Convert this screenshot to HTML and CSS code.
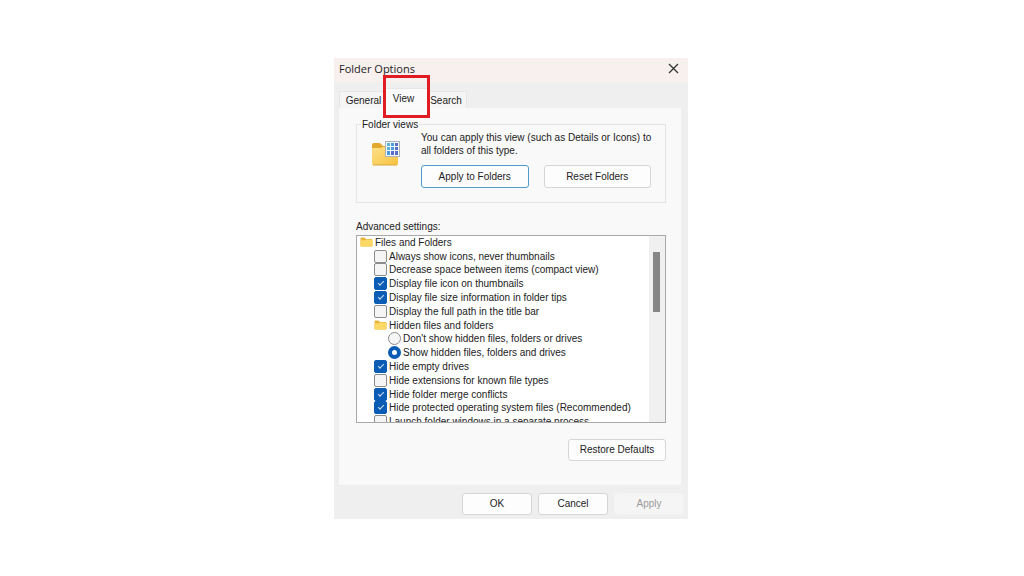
FILE: index.html
```html
<!DOCTYPE html>
<html lang="en">
<head>
  <meta charset="UTF-8">
  <title>Folder Options</title>
  <meta name="viewport" content="width=device-width, initial-scale=1.0">
  <link rel="stylesheet" href="styles.css">
</head>
<body>

  <!-- Folder shape shared by the tree rows -->
  <svg width="0" height="0" class="defs">
    <symbol id="folder" viewBox="0 0 13 10">
      <path d="M0.5 1.5Q0.5 0.5 1.5 0.5H4.5L6 2H11.5Q12.5 2 12.5 3V8.5Q12.5 9.5 11.5 9.5H1.5Q0.5 9.5 0.5 8.5Z" fill="#e9b63c"/>
      <path d="M0.5 4Q0.5 3.2 1.5 3.2H5L6.2 2.4H11.5Q12.5 2.4 12.5 3.3V8.5Q12.5 9.5 11.5 9.5H1.5Q0.5 9.5 0.5 8.5Z" fill="#fcd866"/>
    </symbol>
  </svg>

  <main class="dialog">
    <header class="titlebar">
      <h1>Folder Options</h1>
      <button class="close" aria-label="Close">
        <svg width="11" height="11" viewBox="0 0 11 11"><path d="M1 1L10 10M10 1L1 10" stroke="#333" stroke-width="1.3" fill="none"/></svg>
      </button>
    </header>

    <nav class="tabs" role="tablist">
      <button class="tab" role="tab">General</button>
      <button class="tab active" role="tab" aria-selected="true">View</button>
      <button class="tab" role="tab">Search</button>
    </nav>

    <section class="panel">
      <fieldset class="views">
        <legend>Folder views</legend>
        <svg class="views-icon" width="30" height="28" viewBox="0 0 30 28">
          <defs>
            <linearGradient id="front" x1="0" y1="0" x2="1" y2="1">
              <stop offset="0" stop-color="#fde08a"/>
              <stop offset="1" stop-color="#f6c340"/>
            </linearGradient>
          </defs>
          <path d="M1 6Q1 4 3 4H9L12 7H25Q27 7 27 9V24H1Z" fill="#e3a92f"/>
          <path d="M1 10Q1 9 2 9H9.500L12 8H26Q27 8 27 9V24.500Q27 26 25.500 26H2.500Q1 26 1 24.500Z" fill="url(#front)"/>
          <path d="M2 26H26" stroke="#dba63a"/>
          <rect x="14.500" y="2.500" width="14" height="15" fill="#f4f7fa" stroke="#a9b4be"/>
          <path d="M16 4h3v3h-3zM16 8h3v3h-3z" fill="#58b4d8"/>
          <path d="M20 4h3v3h-3zM20 8h3v3h-3zM16 12h3v4h-3z" fill="#4a9be0"/>
          <path d="M24 4h3v3h-3zM24 8h3v3h-3zM20 12h3v4h-3zM24 12h3v4h-3z" fill="#5a6fcb"/>
        </svg>
        <div class="views-body">
          <p>You can apply this view (such as Details or Icons) to all folders of this type.</p>
          <div class="views-buttons">
            <button class="btn focused">Apply to Folders</button>
            <button class="btn">Reset Folders</button>
          </div>
        </div>
      </fieldset>

      <h2>Advanced settings:</h2>
      <div class="settings">
        <ul class="tree">
          <li><svg class="folder"><use href="#folder"/></svg>Files and Folders</li>
          <li class="l1"><label><input type="checkbox">Always show icons, never thumbnails</label></li>
          <li class="l1"><label><input type="checkbox">Decrease space between items (compact view)</label></li>
          <li class="l1"><label><input type="checkbox" checked>Display file icon on thumbnails</label></li>
          <li class="l1"><label><input type="checkbox" checked>Display file size information in folder tips</label></li>
          <li class="l1"><label><input type="checkbox">Display the full path in the title bar</label></li>
          <li class="l1"><svg class="folder"><use href="#folder"/></svg>Hidden files and folders</li>
          <li class="l2"><label><input type="radio" name="hidden">Don't show hidden files, folders or drives</label></li>
          <li class="l2"><label><input type="radio" name="hidden" checked>Show hidden files, folders and drives</label></li>
          <li class="l1"><label><input type="checkbox" checked>Hide empty drives</label></li>
          <li class="l1"><label><input type="checkbox">Hide extensions for known file types</label></li>
          <li class="l1"><label><input type="checkbox" checked>Hide folder merge conflicts</label></li>
          <li class="l1"><label><input type="checkbox" checked>Hide protected operating system files (Recommended)</label></li>
          <li class="l1"><label><input type="checkbox">Launch folder windows in a separate process</label></li>
        </ul>
        <div class="scrollbar"><div class="thumb"></div></div>
      </div>

      <button class="btn restore">Restore Defaults</button>
    </section>

    <footer class="actions">
      <button class="btn">OK</button>
      <button class="btn">Cancel</button>
      <button class="btn" disabled>Apply</button>
    </footer>
  </main>

</body>
</html>
```
FILE: styles.css
```css
* {
  box-sizing: border-box;
}
body {
  margin: 0;
  padding-right: 2px;
  min-height: 100vh;
  display: flex;
  align-items: center;
  justify-content: center;
  background: #fff;
  color: #222;
  font-family: "Liberation Sans", Arial, sans-serif;
  font-size: 10px;
  line-height: 13px;
}
h1, h2, p, ul {
  margin: 0;
  padding: 0;
  font-size: 10px;
  font-weight: normal;
}
button {
  font: inherit;
  color: inherit;
  padding: 0;
}
.defs {
  position: absolute;
}
.dialog {
  width: 354px;
  max-width: 100%;
  background: #efefef;
}

/* title bar */
.titlebar {
  display: flex;
  align-items: center;
  justify-content: space-between;
  height: 24px;
  padding: 0 9px 2px 5px;
  background: #f8f0ee;
}
.titlebar h1 {
  font-family: "Open Sans", "Segoe UI", sans-serif;
  font-size: 11px;
}
.close {
  display: flex;
  border: none;
  background: none;
}

/* tabs */
.tabs {
  display: flex;
  align-items: flex-end;
  height: 26px;
  padding: 0 5px;
}
.tab {
  height: 17px;
  width: 45px;
  padding: 2px 0 0 4px;
  border: 1px solid #e6e6e6;
  border-bottom: none;
  background: #f5f5f5;
}
.tab:last-child {
  width: 38px;
  padding: 2px 4px 0 0;
}
.tab.active {
  position: relative;
  height: 20px;
  padding: 0 6px 0 0;
  background: #fafafa;
}
/* red highlight around the current tab */
.tab.active::after {
  content: "";
  position: absolute;
  box-sizing: border-box;
  top: -14px;
  left: -2px;
  width: 47px;
  height: 43px;
  border: 3px solid #e01b22;
}

/* page */
.panel {
  display: flex;
  flex-direction: column;
  margin: 0 7px 0 5px;
  padding: 10px 15px 24px 17px;
  background: #f9f9f9;
}
.views {
  display: flex;
  margin: 0;
  padding: 0 14px 14px 14px;
  border: 1px solid #e4e4e4;
}
.views legend {
  margin-left: -10px;
  padding: 0 1px;
}
.views-icon {
  flex: none;
  margin: 8px 20px 0 0;
}
.views-body {
  flex: 1;
}
.views-body p {
  margin-right: -8px;
}
.views-buttons {
  display: grid;
  grid-template-columns: 1fr 1fr;
  gap: 15px;
  margin-top: 8px;
}
.btn {
  height: 22px;
  border: 1px solid #d6d6d6;
  border-radius: 3px;
  background: #fdfdfd;
}
.views-buttons .btn {
  height: 23px;
}
.btn.focused {
  border-color: #4d9ccb;
}
.btn:disabled {
  color: #9a9a9a;
  border-color: #f3f3f3;
  background: #f5f5f5;
}
h2 {
  margin: 17px 0 2px;
}

/* advanced settings list */
.settings {
  display: flex;
  height: 188px;
  overflow: hidden;
  border: 1px solid #a9a9a9;
  background: #fff;
}
.tree {
  flex: 1;
  display: grid;
  grid-auto-rows: 1fr;
  height: 193px;
  padding-left: 3px;
  list-style: none;
}
.tree li, .tree label {
  display: flex;
  align-items: center;
  min-height: 0;
  white-space: nowrap;
}
.tree .l1 {
  padding-left: 14px;
}
.tree .l2 {
  padding-left: 28px;
}
.folder {
  width: 13px;
  height: 10px;
  margin-right: 2px;
}
.tree input {
  appearance: none;
  display: grid;
  place-items: center;
  width: 13px;
  height: 13px;
  margin: 0 2px 0 0;
  border: 1px solid #8c8c8c;
  border-radius: 2px;
  background: #f5f5f5;
}
.tree input:checked {
  border-color: #0a5cb5;
  background: #0a5cb5;
}
.tree input[type="checkbox"]:checked::after {
  content: "";
  width: 5px;
  height: 2px;
  margin-bottom: 2px;
  border: solid #cfe2f5;
  border-width: 0 0 1px 1px;
  transform: rotate(-45deg);
}
.tree input[type="radio"] {
  border-radius: 50%;
}
.tree input[type="radio"]:checked {
  border-width: 4px;
  background: #fff;
}
.scrollbar {
  flex: none;
  width: 16px;
  padding: 16px 5px 0 4px;
  background: #f0f0f0;
}
.thumb {
  height: 60px;
  background: #868686;
}
.restore {
  align-self: flex-end;
  width: 98px;
  margin-top: 16px;
}

/* bottom buttons */
.actions {
  display: flex;
  justify-content: flex-end;
  gap: 6px;
  padding: 8px 4px 4px;
}
.actions .btn {
  width: 70px;
}
```
